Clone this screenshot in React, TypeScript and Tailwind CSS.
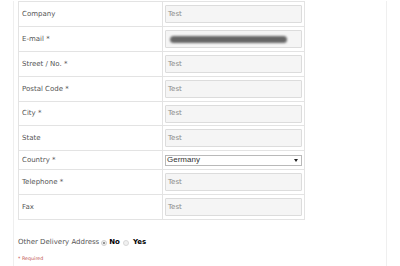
import React from "react";

type Row = { label: string; kind: "input" | "email" | "select"; h?: string };

const rows: Row[] = [
  { label: "Company", kind: "input" },
  { label: "E-mail *", kind: "email" },
  { label: "Street / No. *", kind: "input" },
  { label: "Postal Code *", kind: "input" },
  { label: "City *", kind: "input", h: "h-[24px]" },
  { label: "State", kind: "input" },
  { label: "Country *", kind: "select" },
  { label: "Telephone *", kind: "input" },
  { label: "Fax", kind: "input" },
];

function Field({ kind }: { kind: Row["kind"] }) {
  if (kind === "select") {
    return (
      <div className="w-[137px] h-[11px] bg-white border border-[#b9b9b9] flex items-center justify-between pl-[1px] pr-[3px]">
        <span className="text-[8px] leading-none text-[#333]" style={{ fontFamily: '"Liberation Sans", Arial, sans-serif' }}>
          Germany
        </span>
        <svg width="4" height="3" viewBox="0 0 4 3">
          <path d="M0 0 L4 0 L2 3 Z" fill="#222" />
        </svg>
      </div>
    );
  }
  return (
    <div className="w-[137px] h-[18px] bg-[#f5f5f5] border border-[#dcdcdc] rounded-[1px] flex items-center pl-[2px]">
      {kind === "email" ? (
        <div className="ml-[2px] w-[117px] h-[7px] rounded-full bg-[#666] blur-[1.2px]" />
      ) : (
        <span className="text-[7px] leading-none text-[#8a8a8a]">Test</span>
      )}
    </div>
  );
}

export default function App() {
  return (
    <div
      className="w-[400px] h-[266px] bg-white overflow-hidden"
      style={{ fontFamily: '"DejaVu Sans", sans-serif' }}
    >
      <div className="ml-[13px] w-[374px] h-[266px] border-l border-r border-[#efefef] pl-[4px]">
        <div className="mt-[1px] w-[287px] border-t border-l border-r border-[#e3e3e3]">
          {rows.map((r) => (
            <div
              key={r.label}
              className={`flex border-b border-[#e3e3e3] ${r.kind === "select" ? "h-[19px]" : r.h ?? "h-[25px]"}`}
            >
              <div className="w-[144px] border-r border-[#e3e3e3] flex items-center pl-[3px]">
                <span className="text-[7px] leading-none text-[#555]">{r.label}</span>
              </div>
              <div className="w-[141px] flex items-center pl-[2px]">
                <Field kind={r.kind} />
              </div>
            </div>
          ))}
        </div>
        <div className="mt-[19px] flex items-center text-[7px] leading-none text-[#555]">
          <span>Other Delivery Address</span>
          <span className="ml-[2px] w-[6px] h-[6px] rounded-full border border-[#d0d0d0] bg-[#f0f0f0] flex items-center justify-center">
            <span className="w-[2px] h-[2px] rounded-full bg-[#777]" />
          </span>
          <span className="ml-[2px] font-bold text-black">No</span>
          <span className="ml-[3px] w-[6px] h-[6px] rounded-full border border-[#d8d8d8] bg-[#f0f0f0]" />
          <span className="ml-[4px] font-bold text-black">Yes</span>
        </div>
        <div className="mt-[11px] text-[4.8px] leading-none text-[#c0504d]">* Required</div>
      </div>
    </div>
  );
}
